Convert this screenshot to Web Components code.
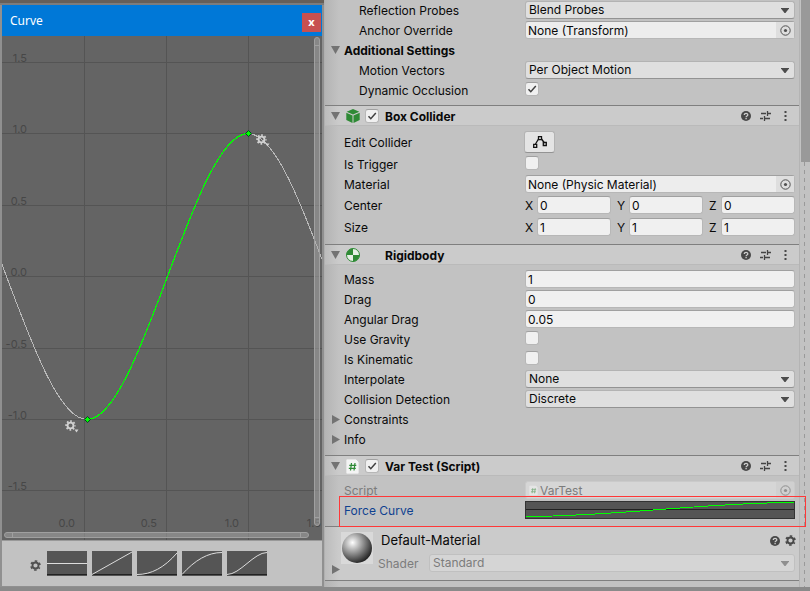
<!DOCTYPE html>
<html lang="en">
<head>
<meta charset="utf-8">
<title>Inspector</title>
<style>
body {
  margin: 0;
  min-height: 100vh;
  box-sizing: border-box;
  padding-bottom: 4px;
  display: grid;
  grid-template-columns: 2fr 3fr;
  background: #8a8a8a;
  color: #090909;
  font-family: Inter, "Liberation Sans", sans-serif;
  font-size: 12px;
}
</style>
</head>
<body>

<curve-window title-text="Curve"></curve-window>

<inspector-panel>
  <component-section>
    <prop-row indent label="Reflection Probes" type="popup" value="Blend Probes"></prop-row>
    <prop-row indent label="Anchor Override" type="object" value="None (Transform)"></prop-row>
    <prop-row fold="open" label="Additional Settings"></prop-row>
    <prop-row indent label="Motion Vectors" type="popup" value="Per Object Motion"></prop-row>
    <prop-row indent label="Dynamic Occlusion" type="toggle" checked></prop-row>
  </component-section>

  <component-section heading="Box Collider" icon="cube" toggle>
    <prop-row label="Edit Collider" type="edit"></prop-row>
    <prop-row label="Is Trigger" type="toggle"></prop-row>
    <prop-row label="Material" type="object" value="None (Physic Material)"></prop-row>
    <prop-row label="Center" type="vector" value="0"></prop-row>
    <prop-row label="Size" type="vector" value="1"></prop-row>
  </component-section>

  <component-section heading="Rigidbody" icon="ball">
    <prop-row label="Mass" type="text" value="1"></prop-row>
    <prop-row label="Drag" type="text" value="0"></prop-row>
    <prop-row label="Angular Drag" type="text" value="0.05"></prop-row>
    <prop-row label="Use Gravity" type="toggle"></prop-row>
    <prop-row label="Is Kinematic" type="toggle"></prop-row>
    <prop-row label="Interpolate" type="popup" value="None"></prop-row>
    <prop-row label="Collision Detection" type="popup" value="Discrete"></prop-row>
    <prop-row fold="closed" label="Constraints"></prop-row>
    <prop-row fold="closed" label="Info"></prop-row>
  </component-section>

  <component-section heading="Var Test (Script)" icon="script" toggle>
    <prop-row disabled label="Script" type="object" value="VarTest"></prop-row>
    <prop-row marked label="Force Curve" type="curve"></prop-row>
  </component-section>

  <material-header name="Default-Material" shader="Standard"></material-header>
</inspector-panel>

<script>
(function() {

// shared drawings
const icons = {
  down: '<svg width="9" height="8" viewBox="0 0 9 8"><path d="M0 0h9L4.500 8z" fill="#737373"/></svg>',
  right: '<svg width="8" height="9" viewBox="0 0 8 9"><path d="M0 0v9L8 4.500z" fill="#737373"/></svg>',
  caret: '<svg width="8" height="5" viewBox="0 0 8 5"><path d="M0 0h8v.5L4.500 5h-1L0 .5z" fill="#4c4c4c"/></svg>',
  help: '<svg width="10" height="10" viewBox="0 0 10 10"><circle cx="5" cy="5" r="5" fill="#484848"/><path d="M3.300 3.900C3.300 1.900 6.800 1.900 6.800 3.900 6.800 5 5.100 5 5.100 6.200M5.100 7.100v1.200" fill="none" stroke="#d0d0d0" stroke-width="1.300"/></svg>',
  sliders: '<svg width="11" height="10" viewBox="0 0 11 10"><path d="M1 2.500h5M8 2.500h3M0 7.500h3M5 7.500h5M7.500 0v5M4.500 5v5" fill="none" stroke="#444" stroke-width="1.300"/></svg>',
  dots: '<svg width="3" height="10" viewBox="0 0 3 10"><path d="M.5 0h2v2h-2zM.5 4h2v2h-2zM.5 8h2v2h-2z" fill="#484848"/></svg>',
  gear: '<svg width="11" height="11" viewBox="0 0 12 12"><g fill="none" stroke="currentColor"><circle cx="6" cy="6" r="3.300" stroke-width="2"/><circle cx="6" cy="6" r="4.900" stroke-width="1.800" stroke-dasharray="2.565" stroke-dashoffset="1.280" transform="rotate(30 6 6)"/></g></svg>',
  gear8: '<svg width="11" height="11" viewBox="0 0 12 12"><g fill="none" stroke="currentColor"><circle cx="6" cy="6" r="3.200" stroke-width="2"/><circle cx="6" cy="6" r="4.800" stroke-width="1.800" stroke-dasharray="1.885" stroke-dashoffset=".94"/></g></svg>',
  picker: '<svg width="11" height="11" viewBox="0 0 11 11"><circle cx="5.500" cy="5.500" r="4.700" fill="none" stroke="#505050"/><circle cx="5.500" cy="5.500" r="1.600" fill="#505050"/></svg>',
  cube: '<svg width="14" height="14" viewBox="0 0 14 14"><path d="M7 0l6.300 2.700L7 5.500.7 2.700zM.3 3.700l6.200 2.700V14L.3 11zM13.700 3.700L7.500 6.400V14l6.200-3z" fill="#2e8a35"/></svg>',
  ball: '<svg width="14" height="14" viewBox="0 0 14 14"><circle cx="7" cy="7" r="6.500" fill="#e6efe6" stroke="#2e8a35"/><path d="M7 7V.5A6.500 6.500 0 0 0 .5 7zM7 7v6.500A6.500 6.500 0 0 0 13.500 7z" fill="#2e8a35"/></svg>',
  script: '<svg width="13" height="15" viewBox="0 0 13 15"><path d="M1 0h9l3 3v11a1 1 0 0 1-1 1H1a1 1 0 0 1-1-1V1a1 1 0 0 1 1-1z" fill="#f4f4f4" stroke="#bbb" stroke-width=".5"/><path d="M5.500 4l-1 7.500M9 4l-1 7.500M3.300 6.300h7M2.800 9.300h7" stroke="#2e8a35" stroke-width="1.200"/></svg>',
  edit: '<svg width="14" height="12" viewBox="0 0 14 12"><path d="M2.500 8L5.500 3M8.500 3l3 4" stroke="#111" stroke-width="1.300"/><path d="M5.500.7h3v3h-3zM.7 8.300h3v3h-3zM10.300 6.500h3v3h-3z" fill="none" stroke="#111" stroke-width="1.300"/></svg>'
};

// reset and control looks used by every inspector element
const controls = `
* {box-sizing: border-box;}
svg {display: block;}
button {margin: 0; padding: 0; border: 0; background: none; color: inherit; font: inherit; display: flex; align-items: center; justify-content: center;}
input, select {margin: 0; font: inherit; color: inherit; width: 100%; min-width: 0; height: 18px; border-radius: 3px; outline: 0;}
input[type=text] {background: #f0f0f0; border: 1px solid #b7b7b7; border-top-color: #a0a0a0; padding: 0 2px;}
select {appearance: none; background: #dfdfdf; border: 1px solid #b3b3b3; border-bottom-color: #939393; padding: 0 3px 2px;}
input[type=checkbox] {appearance: none; width: 14px; height: 14px; background: #f0f0f0; border: 1px solid #b7b7b7; border-top-color: #a0a0a0; display: block; flex: none;}
input[type=checkbox]:checked {background: #f0f0f0 url("data:image/svg+xml,%3Csvg xmlns='http://www.w3.org/2000/svg' viewBox='0 0 12 12'%3E%3Cpath d='M2.500 6.200l2.300 2.500L9.800 3' fill='none' stroke='%23404040' stroke-width='1.500'/%3E%3C/svg%3E");}
.popup {position: relative; flex: 1;}
.popup select {display: block;}
.popup svg {position: absolute; right: 6px; top: 7px; pointer-events: none;}
`;

function define(name, css, render) {
  customElements.define(name, class extends HTMLElement {
    constructor() {
      super();
      this.attachShadow({mode: 'open'});
    }
    connectedCallback() {
      const template = document.createElement('template');
      template.innerHTML = '<style>' + controls + css + '</style>' + render(this);
      this.shadowRoot.replaceChildren(template.content.cloneNode(true));
    }
  });
}

/* ---------- inspector ---------- */

define('inspector-panel', `
:host {display: flex; min-width: 0; background: #c2c2c2;}
main {flex: 1; min-width: 0; border-left: 1px solid #b0b0b0; background: linear-gradient(90deg, #b4b4b4, #c2c2c2 14px);}
aside {width: 11px; border-left: 1px solid #b4b4b4; position: relative; display: flex; flex-direction: column;}
.thumb {height: 162px; margin-left: 1px; background: #999;}
.track {flex: 1; margin-left: 4px; width: 1px; background: repeating-linear-gradient(#999 0 4px, transparent 4px 8px);}
`, () => `<main><slot></slot></main><aside><div class="thumb"></div><div class="track"></div></aside>`);

define('component-section', `
:host {display: block;}
header {display: flex; align-items: center; height: 21px; border-top: 1px solid #7f7f7f; border-bottom: 1px solid #bababa; background: linear-gradient(90deg, #bcbcbc, #cbcbcb 14px); padding: 1px 8px 0 6px;}
.fold {width: 9px;}
.icon {width: 15px; margin-left: 6px;}
.check {width: 14px; margin-left: 4px;}
h2 {flex: 1; margin: 0 0 0 6px; padding-top: 1px; font-size: 12px; line-height: 18px; font-weight: 700;}
.tools {display: flex; gap: 9px;}
.tools button {width: 11px; height: 18px;}
.body {padding: 4px 0 6px;}
.body.first {padding: 0 0 5px;}
`, el => {
  const heading = el.getAttribute('heading');
  if (!heading) return '<div class="body first"><slot></slot></div>';
  return `<header>
    <button class="fold" aria-label="Fold ${heading}">${icons.down}</button>
    <span class="icon">${icons[el.getAttribute('icon')]}</span>
    <span class="check">${el.hasAttribute('toggle') ? `<input type="checkbox" checked aria-label="Enable ${heading}">` : ''}</span>
    <h2>${heading}</h2>
    <div class="tools">
      <button aria-label="Help">${icons.help}</button>
      <button aria-label="Presets">${icons.sliders}</button>
      <button aria-label="More">${icons.dots}</button>
    </div>
  </header>
  <div class="body"><slot></slot></div>`;
});

const fields = {
  text: v => `<input type="text" id="f" value="${v}">`,
  toggle: (v, el) => `<input type="checkbox" id="f" ${el.hasAttribute('checked') ? 'checked' : ''}>`,
  popup: v => `<div class="popup"><select id="f"><option>${v}</option></select>${icons.caret}</div>`,
  object: (v, el) => `<div class="object">${el.hasAttribute('disabled') ? icons.script : ''}<input type="text" id="f" readonly value="${v}"><button aria-label="Select object">${icons.picker}</button></div>`,
  edit: () => `<button class="edit" id="f">${icons.edit}</button>`,
  vector: v => ['X', 'Y', 'Z'].map(a => `<label class="axis"><span>${a}</span><input type="text" value="${v}"></label>`).join(''),
  curve: () => `<button class="curve" id="f"><svg width="100%" height="18" viewBox="0 0 270 18" preserveAspectRatio="none" shape-rendering="crispEdges"><rect width="270" height="18" fill="#555"/><path d="M0 8.500h270" stroke="#222"/><path d="M1 15.500C90 15.500 180 1.500 269 1.500" fill="none" stroke="#0f0"/><path d="M.5.5h269v17H.5z" fill="none" stroke="#333"/></svg></button>`
};

define('prop-row', `
:host {display: grid; grid-template-columns: 181px minmax(0, 1fr); align-items: center; height: 20px; padding: 0 4px 0 19px; position: relative;}
:host([type=edit]) {height: 24px;}
:host([type=vector]) {height: 22px;}
.name {line-height: 18px; padding-top: 2px; white-space: nowrap;}
:host([indent]) .name {padding-left: 15px;}
:host([fold]) {display: flex; padding-left: 6px; gap: 4px;}
:host([fold]) button {width: 9px; flex: none;}
:host([fold=open]) .name {font-weight: 700;}
:host([disabled]) {color: #7c7c7c;}
.field {display: flex; align-items: center; gap: 6px;}
:host([type=toggle]) .field {height: 18px; align-items: flex-start; padding-top: 1px;}
.object {flex: 1; display: flex; align-items: center; height: 18px; background: #ededed; border: 1px solid #b7b7b7; border-top-color: #a0a0a0; border-radius: 3px;}
.object input {flex: 1; border: 0; background: none; height: 16px;}
.object button {width: 18px; height: 16px; background: #dedede;}
:host([disabled]) .object {background: #d6d6d6; border-color: #cacaca;}
:host([disabled]) .object button {background: #d0d0d0;}
:host([disabled]) .object svg {opacity: .5; flex: none;}
:host([disabled]) .object > svg {width: 9px; height: 11px; margin-left: 3px;}
.edit {width: 31px; height: 22px; background: #e4e4e4; border: 1px solid #b3b3b3; border-bottom-color: #939393; border-radius: 3px;}
:host([type=edit]) {grid-template-columns: 180px minmax(0, 1fr);}
.axis {flex: 1; display: flex; align-items: center;}
.axis span {width: 12px; flex: none;}
.curve {flex: 1; height: 18px;}
:host([marked]) {color: #0f4190;}
.mark {position: absolute; left: 14px; right: -7px; top: -4px; height: 31px; border: 1px solid #ff3838; pointer-events: none; z-index: 1;}
`, el => {
  const label = el.getAttribute('label');
  const fold = el.getAttribute('fold');
  if (fold) return `<button aria-label="Fold ${label}">${fold == 'open' ? icons.down : icons.right}</button><span class="name">${label}</span>`;
  const type = el.getAttribute('type');
  const tag = type == 'vector' ? 'span' : 'label';
  return `<${tag} class="name" ${tag == 'label' ? 'for="f"' : ''}>${label}</${tag}>
  <div class="field">${fields[type](el.getAttribute('value'), el)}</div>
  ${el.hasAttribute('marked') ? '<div class="mark"></div>' : ''}`;
});

define('material-header', `
:host {display: grid; grid-template-columns: 9px 32px minmax(0, 1fr); column-gap: 4px; height: 53px; padding: 0 4px 0 6px; background: linear-gradient(90deg, #bcbcbc, #cbcbcb 14px); border: 1px solid #7f7f7f; border-width: 1px 0;}
.fold {align-self: end; margin-bottom: 6px; height: 9px;}
.ball {margin-top: 5px; margin-left: -3px; width: 32px; height: 32px; background: #d9d9d9;}
.top {display: flex; align-items: center; gap: 5px; height: 27px; margin-right: -1px;}
h2 {margin: 0; flex: 1; font-size: 13px; line-height: 27px; font-weight: 400; padding-left: 1px;}
.top button {width: 11px; height: 16px; color: #484848;}
.bottom {display: flex; align-items: center; height: 18px; color: #7c7c7c; margin-left: -2px;}
label {width: 51px;}
select {background: #d5d5d5; border-color: #c0c0c0;}
.popup svg {opacity: .5;}
`, el => `<button class="fold" aria-label="Fold material">${icons.right}</button>
<svg class="ball" viewBox="0 0 32 32">
  <defs><radialGradient id="g" cx=".35" cy=".32" r=".72"><stop offset="0" stop-color="#fff"/><stop offset=".15" stop-color="#ddd"/><stop offset=".55" stop-color="#858585"/><stop offset="1" stop-color="#222"/></radialGradient></defs>
  <circle cx="16" cy="16" r="15" fill="url(#g)"/>
</svg>
<div>
  <div class="top"><h2>${el.getAttribute('name')}</h2><button aria-label="Help">${icons.help}</button><button aria-label="Settings">${icons.gear}</button></div>
  <div class="bottom"><label for="s">Shader</label><div class="popup"><select id="s"><option>${el.getAttribute('shader')}</option></select>${icons.caret}</div></div>
</div>`);

/* ---------- curve editor ---------- */

const gridX = [[82, '0.0'], [164, '0.5'], [246, '1.0'], [328, '1.5']];
const gridY = [[26, '1.5'], [97, '1.0'], [169, '0.5'], [240, '0.0'], [312, '-0.5'], [383, '-1.0'], [454, '-1.5']];

const presets = [
  ['Constant', 'M0 12.500H40'],
  ['Linear', 'M0 23.500L40 1'],
  ['Ease in', 'M0 23.500C14 23.500 27 17 40 2'],
  ['Ease out', 'M0 23.500C13 9 26 1.500 40 1.500'],
  ['Ease in out', 'M0 23.500C13 23.500 27 1.500 40 1.500']
];

function keyMenu(x, y) {
  return `<g transform="translate(${x} ${y})" color="#d2d2d2">${icons.gear8}<path d="M9.500 9.500h4l-2 3z" fill="#d2d2d2"/></g>`;
}

define('curve-window', `
:host {display: flex; flex-direction: column; min-width: 0; padding: 5px 2px 1px; background: linear-gradient(#665f58 0 3px, #7c7c7c 3px 5px, #909090 5px);}
.title {display: flex; align-items: center; height: 31px; background: #0078d7; color: #fff; padding: 0 1px 0 8px;}
.title span {flex: 1; font: 12px/30px "Noto Sans", sans-serif;}
.title button {width: 19px; height: 19px; margin-top: 3px; background: #c75050; color: #fff; font: bold 11px/17px "Noto Sans", sans-serif; align-items: flex-start;}
.graph {flex: 1; min-height: 503px; position: relative; background: #646464; overflow: hidden;}
text {font-size: 11px; fill: #474747;}
.grid {stroke: #545454;}
.bar {position: absolute; border: 1px solid #a0a0a0; border-radius: 3px; background: rgba(170,170,170,.5); display: flex; justify-content: space-between; padding: 0 7px;}
.bar:before, .bar:after {content: ""; width: 1px; height: 100%; background: #a0a0a0;}
.v {right: 2px; top: 1px; bottom: 14px; width: 6px; flex-direction: column; padding: 7px 0;}
.v:before, .v:after {width: 100%; height: 1px;}
.h {left: 2px; right: 13px; bottom: 2px; height: 6px;}
.presets {display: flex; gap: 5px; align-items: center; height: 46px; background: #c2c2c2; border-top: 1px solid #999; padding: 0 27px 1px; color: #505050;}
.presets button:first-child {width: 13px; height: 13px; margin-top: 5px;}
`, el => `<div class="title"><span>${el.getAttribute('title-text')}</span><button aria-label="Close">x</button></div>
<div class="graph">
  <svg width="100%" height="504">
    <g class="grid">${gridX.map(g => `<path d="M${g[0] + .5} 0V504"/>`).join('')}${gridY.map(g => `<path d="M0 ${g[0] + .5}H1000"/>`).join('')}</g>
    ${gridX.map(g => `<text x="${g[0] - 9}" y="491" text-anchor="end">${g[1]}</text>`).join('')}
    ${gridY.map(g => `<text x="25" y="${g[0]}" text-anchor="end">${g[1]}</text>`).join('')}
    <g fill="none" shape-rendering="crispEdges">
      <path d="M-76 97.500C-22 97.500 31 383.500 85 383.500M246 97.500C300 97.500 353 383.500 407 383.500" stroke="#b9b9b9"/>
      <path d="M85 383.500C139 383.500 192 97.500 246 97.500" stroke="#0f0" stroke-width="1.200"/>
    </g>
    <path d="M85.500 380.500l3 3-3 3-3-3zM246.500 94.500l3 3-3 3-3-3z" fill="#0f0" stroke="#042"/>
    ${keyMenu(63, 384)}${keyMenu(254, 98)}
  </svg>
  <div class="bar v"></div>
  <div class="bar h"></div>
</div>
<div class="presets">
  <button aria-label="Preset options">${icons.gear}</button>
  ${presets.map(p => `<button aria-label="${p[0]}"><svg width="40" height="25"><rect width="40" height="25" fill="#555"/><path d="M0 23.500h40" stroke="#222"/><path d="${p[1]}" fill="none" stroke="#ddd"/></svg></button>`).join('')}
</div>`);

})();
</script>
</body>
</html>
